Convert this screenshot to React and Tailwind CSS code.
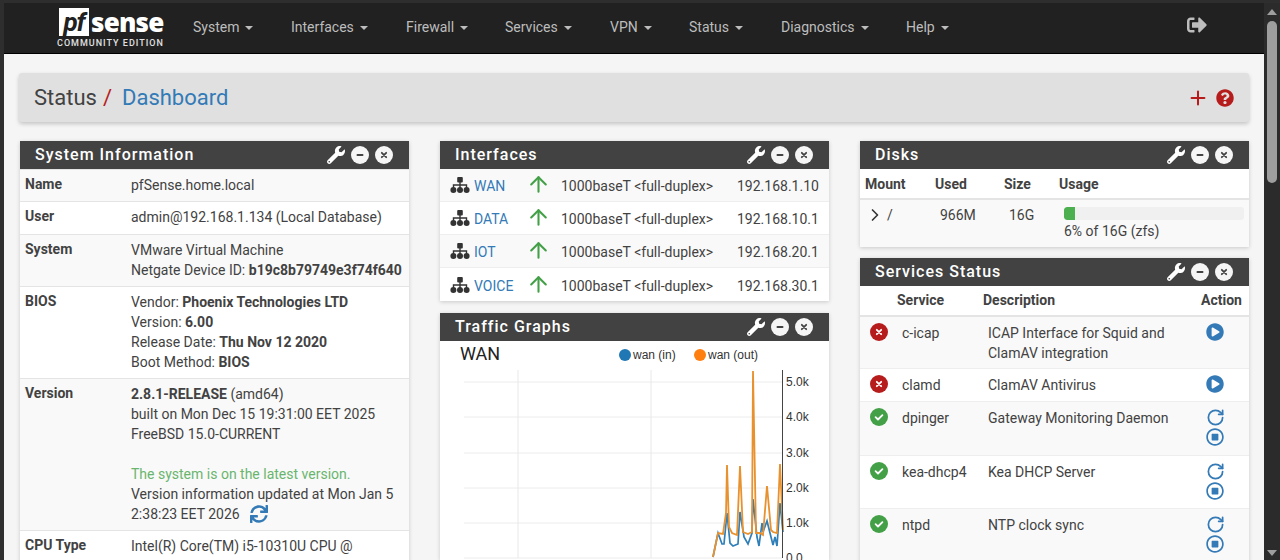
import { ArrowUp, ChevronRight, Plus, RotateCw } from 'lucide-react'
import {
  FaPlayCircle,
  FaQuestionCircle,
  FaRegStopCircle,
  FaSignOutAlt,
  FaSync,
  FaWrench,
} from 'react-icons/fa'

const menu = [
  ['System', 'w-[98px]'],
  ['Interfaces', 'w-[115px]'],
  ['Firewall', 'w-[99px]'],
  ['Services', 'w-[105px]'],
  ['VPN', 'w-[79px]'],
  ['Status', 'w-[92px]'],
  ['Diagnostics', 'w-[125px]'],
  ['Help', 'w-[80px]'],
]

const interfaces = [
  ['WAN', '192.168.1.10'],
  ['DATA', '192.168.10.1'],
  ['IOT', '192.168.20.1'],
  ['VOICE', '192.168.30.1'],
]

const services = [
  { name: 'c-icap', desc: 'ICAP Interface for Squid and ClamAV integration', up: false, h: 'h-[52px]', bg: 'bg-[#f9f9f9]' },
  { name: 'clamd', desc: 'ClamAV Antivirus', up: false, h: 'h-[33px]', bg: 'bg-white' },
  { name: 'dpinger', desc: 'Gateway Monitoring Daemon', up: true, h: 'h-[54px]', bg: 'bg-[#f9f9f9]' },
  { name: 'kea-dhcp4', desc: 'Kea DHCP Server', up: true, h: 'h-[53px]', bg: 'bg-white' },
  { name: 'ntpd', desc: 'NTP clock sync', up: true, h: 'h-[54px]', bg: 'bg-[#f9f9f9]' },
]

const orange = '713,557 718,533 723,534 726,513 727,465 729,527 732,533 737,535 740,466 743,532 748,534 752,532 753,371 756,533 760,533 763,535 767,486 771,530 773,532 777,533 780,464 783,530'
const blue = '713,557 718,533 722,544 724,544 727,513 730,543 733,546 738,544 740,512 744,537 748,544 752,533 753,499 757,537 759,546 762,523 763,532 767,521 771,537 773,545 775,537 777,546 780,503 783,532'

// round badge with a small glyph knocked out, the fa icons draw it too big here
function Dot({ kind, fill, ink }) {
  return (
    <svg width="18" height="18" viewBox="0 0 18 18" className="block shrink-0">
      <circle cx="9" cy="9" r="9" fill={fill} />
      {kind === 'minus' && <path d="M6.4 9h5.2" stroke={ink} strokeWidth="1.8" strokeLinecap="round" />}
      {kind === 'close' && <path d="M6.8 6.8l4.4 4.4M11.2 6.8l-4.4 4.4" stroke={ink} strokeWidth="1.8" strokeLinecap="round" />}
      {kind === 'check' && <path d="M5.6 9.2l2.4 2.3 4.4-4.4" fill="none" stroke={ink} strokeWidth="1.8" strokeLinecap="round" strokeLinejoin="round" />}
    </svg>
  )
}

function NetIcon() {
  return (
    <svg width="20" height="16" viewBox="0 0 20 16" className="block">
      <rect x="7.2" y="0" width="5.6" height="5.4" rx="1" fill="#333" />
      <path d="M10 5v6M3.5 11V8h13v3" fill="none" stroke="#333" strokeWidth="1.4" />
      <circle cx="3.4" cy="13" r="3" fill="#333" />
      <circle cx="10" cy="13" r="3" fill="#333" />
      <circle cx="16.6" cy="13" r="3" fill="#333" />
    </svg>
  )
}

function Panel({ title, children }) {
  return (
    <section className="bg-white shadow-[0_1px_4px_rgba(0,0,0,0.18)]">
      <div className="flex h-[28px] items-center justify-between bg-[#424242] pl-[15px] pr-[16px] text-white">
        <h2 className="text-[16px] font-medium tracking-[1px]">{title}</h2>
        <div className="flex items-center gap-[6px]">
          <FaWrench size={18} />
          <Dot kind="minus" fill="#f5f5f5" ink="#424242" />
          <Dot kind="close" fill="#f5f5f5" ink="#424242" />
        </div>
      </div>
      {children}
    </section>
  )
}

function InfoRow({ label, odd, h, children }) {
  return (
    <div className={`flex border-t border-[#e4e4e4] pl-[5px] first:border-t-0 ${h} ${odd ? 'bg-[#f9f9f9]' : 'bg-white'}`}>
      <div className="w-[106px] shrink-0 pt-[4px] font-bold">{label}</div>
      <div className="pt-[5px]">{children}</div>
    </div>
  )
}

function TrafficChart() {
  const rows = [382, 417, 453, 488, 523, 558]
  const labels = ['5.0k', '4.0k', '3.0k', '2.0k', '1.0k', '0.0']
  return (
    <svg viewBox="440 341 389 219" className="block h-[219px] w-full" fontFamily="Liberation Sans, sans-serif">
      <text x="460" y="360" fontSize="18" fontFamily="Roboto, sans-serif" fill="#222">WAN</text>
      <circle cx="625" cy="355" r="6" fill="#1f77b4" />
      <text x="633" y="359" fontSize="12" fill="#333">wan (in)</text>
      <circle cx="700" cy="355" r="6" fill="#ff7f0e" />
      <text x="708" y="359" fontSize="12" fill="#333">wan (out)</text>
      {rows.map((y) => (
        <line key={y} x1="464" x2="782" y1={y} y2={y} stroke="#ececec" strokeWidth="1" />
      ))}
      <line x1="518" x2="518" y1="370" y2="558" stroke="#e8e8e8" />
      <line x1="651" x2="651" y1="370" y2="558" stroke="#e8e8e8" />
      <polyline points={blue} fill="none" stroke="#2f7fb8" strokeWidth="1.7" />
      <polyline points={orange} fill="none" stroke="#e8912f" strokeWidth="1.8" />
      <line x1="782.5" x2="782.5" y1="370" y2="558" stroke="#444" />
      {labels.map((t, i) => (
        <text key={t} x="786" y={rows[i] + 4} fontSize="12" fill="#333">{t}</text>
      ))}
    </svg>
  )
}

export default function App() {
  return (
    <div className="flex h-[560px] overflow-hidden bg-[#2e2e2e] pl-[4px] pt-[3px] font-['Roboto',sans-serif] text-[14px] leading-[20px] text-[#424242]">
      <div className="flex min-w-0 flex-1 flex-col bg-[#f5f5f5]">
        <nav className="flex h-[51px] shrink-0 items-center border-b border-black bg-[#212121] pl-[55px] text-[#bdbdbd]">
          <div className="flex w-[134px] shrink-0 flex-col items-start">
            <div className="flex h-[28px] items-center">
              <span className="flex h-[28px] w-[30px] items-center justify-center bg-white text-[26px] font-bold italic leading-none tracking-[-1px] text-[#212121]">pf</span>
              <span className="ml-[2px] font-['Open_Sans',sans-serif] text-[26px] font-extrabold leading-[24px] tracking-[-0.8px] text-white">sense</span>
            </div>
            <span className="ml-[-2px] mt-[3px] whitespace-nowrap text-[9px] font-medium leading-[9px] tracking-[1px] text-[#e0e0e0]">COMMUNITY EDITION</span>
          </div>
          {menu.map(([item, w]) => (
            <div key={item} className={`mb-[2px] flex shrink-0 items-center ${w}`}>
              {item}
              <span className="ml-[6px] mt-[1px] h-0 w-0 border-x-[4px] border-t-[4px] border-x-transparent border-t-[#bdbdbd]" />
            </div>
          ))}
          <FaSignOutAlt size={20} className="mb-[6px] ml-[201px] shrink-0" />
        </nav>

        <div className="pl-[16px] pr-[15px]">
          <header className="-ml-[1px] mt-[19px] flex h-[49px] items-center justify-between rounded-[3px] bg-[#e0e0e0] pl-[15px] pr-[15px] text-[22px] shadow-[0_2px_4px_rgba(0,0,0,0.2)]">
            <div className="flex items-center">
              <span>Status</span>
              <span className="ml-[6px] text-[#b71c1c]">/</span>
              <span className="ml-[10px] text-[#337ab7]">Dashboard</span>
            </div>
            <div className="flex items-center gap-[7px] text-[#b71c1c]">
              <Plus size={22} strokeWidth={2.2} />
              <FaQuestionCircle size={18} />
            </div>
          </header>

          <div className="mt-[19px] grid grid-cols-[389px_389px_389px] gap-x-[31px]">
            <Panel title="System Information">
              <InfoRow label="Name" odd h="h-[32px]">pfSense.home.local</InfoRow>
              <InfoRow label="User" h="h-[33px]">admin@192.168.1.134 (Local Database)</InfoRow>
              <InfoRow label="System" odd h="h-[52px]">
                VMware Virtual Machine<br />
                Netgate Device ID: <b>b19c8b79749e3f74f640</b>
              </InfoRow>
              <InfoRow label="BIOS" h="h-[92px]">
                Vendor: <b>Phoenix Technologies LTD</b><br />
                Version: <b>6.00</b><br />
                Release Date: <b>Thu Nov 12 2020</b><br />
                Boot Method: <b>BIOS</b>
              </InfoRow>
              <InfoRow label="Version" odd h="h-[152px]">
                <b>2.8.1-RELEASE</b> (amd64)<br />
                built on Mon Dec 15 19:31:00 EET 2025<br />
                FreeBSD 15.0-CURRENT<br />
                <br />
                <span className="text-[#6ab56e]">The system is on the latest version.</span><br />
                Version information updated at Mon Jan 5<br />
                <span className="inline-flex items-center">
                  2:38:23 EET 2026
                  <FaSync size={18} className="ml-[10px] text-[#337ab7]" />
                </span>
              </InfoRow>
              <InfoRow label="CPU Type" h="h-[40px]">Intel(R) Core(TM) i5-10310U CPU @</InfoRow>
            </Panel>

            <div className="flex flex-col gap-[12px]">
              <Panel title="Interfaces">
                {interfaces.map(([name, ip], i) => (
                  <div
                    key={name}
                    className={`grid h-[33px] grid-cols-[24px_57px_30px_176px_1fr] items-center border-b border-[#eeeeee] pl-[10px] pt-[2px] last:border-b-0 ${i % 2 === 0 ? 'bg-[#f9f9f9]' : 'bg-white'}`}
                  >
                    <span className="mb-[2px]"><NetIcon /></span>
                    <span className="text-[#337ab7]">{name}</span>
                    <ArrowUp size={25} strokeWidth={2} className="-ml-[5px] mb-[3px] text-[#43a047]" />
                    <span>1000baseT &lt;full-duplex&gt;</span>
                    <span>{ip}</span>
                  </div>
                ))}
              </Panel>
              <Panel title="Traffic Graphs">
                <TrafficChart />
              </Panel>
            </div>

            <div className="flex flex-col gap-[11px]">
              <Panel title="Disks">
                <div className="grid h-[31px] grid-cols-[70px_69px_55px_1fr] items-center border-b-2 border-[#e4e4e4] pl-[5px] font-bold">
                  <span>Mount</span>
                  <span>Used</span>
                  <span>Size</span>
                  <span>Usage</span>
                </div>
                <div className="grid h-[47px] grid-cols-[70px_69px_55px_1fr] bg-[#f9f9f9] pl-[5px] pt-[5px]">
                  <span className="flex h-[20px] items-center">
                    <ChevronRight size={20} strokeWidth={2} className="text-[#333]" />
                    <span className="ml-[2px]">/</span>
                  </span>
                  <span className="pl-[5px]">966M</span>
                  <span className="pl-[5px]">16G</span>
                  <div className="pl-[5px] pr-[5px]">
                    <div className="mt-[2px] h-[13px] overflow-hidden rounded-[3px] bg-[#f0f0f0]">
                      <div className="h-full w-[6%] rounded-l-[3px] bg-[#4caf50]" />
                    </div>
                    <div className="mt-[1px]">6% of 16G (zfs)</div>
                  </div>
                </div>
              </Panel>
              <Panel title="Services Status">
                <div className="grid h-[31px] grid-cols-[37px_86px_218px_1fr] items-center border-b-2 border-[#e4e4e4] pb-[2px] font-bold">
                  <span />
                  <span>Service</span>
                  <span>Description</span>
                  <span>Action</span>
                </div>
                {services.map((s) => (
                  <div key={s.name} className={`grid grid-cols-[37px_86px_218px_1fr] border-b border-[#eeeeee] ${s.h} ${s.bg}`}>
                    <span className="pl-[10px] pt-[6px]">
                      {s.up ? <Dot kind="check" fill="#43a047" ink="#ffffff" /> : <Dot kind="close" fill="#b71c1c" ink="#ffffff" />}
                    </span>
                    <span className="pl-[5px] pt-[6px]">{s.name}</span>
                    <span className="pl-[5px] pr-[10px] pt-[6px]">{s.desc}</span>
                    <span className="flex flex-col gap-[1px] pl-[5px] pt-[6px] text-[#337ab7]">
                      {s.up ? (
                        <>
                          <RotateCw size={19} strokeWidth={2.2} />
                          <FaRegStopCircle size={18} />
                        </>
                      ) : (
                        <FaPlayCircle size={18} />
                      )}
                    </span>
                  </div>
                ))}
              </Panel>
            </div>
          </div>
        </div>
      </div>

      <div className="relative w-[16px] shrink-0 bg-[#2b2b2b]">
        <span className="absolute left-[3px] top-[6px] h-0 w-0 border-x-[5px] border-b-[6px] border-x-transparent border-b-[#9e9e9e]" />
        <div className="absolute left-[3px] top-[18px] h-[162px] w-[10px] rounded-[5px] bg-[#9e9e9e]" />
        <span className="absolute bottom-[4px] left-[3px] h-0 w-0 border-x-[5px] border-t-[6px] border-x-transparent border-t-[#9e9e9e]" />
      </div>
    </div>
  )
}
